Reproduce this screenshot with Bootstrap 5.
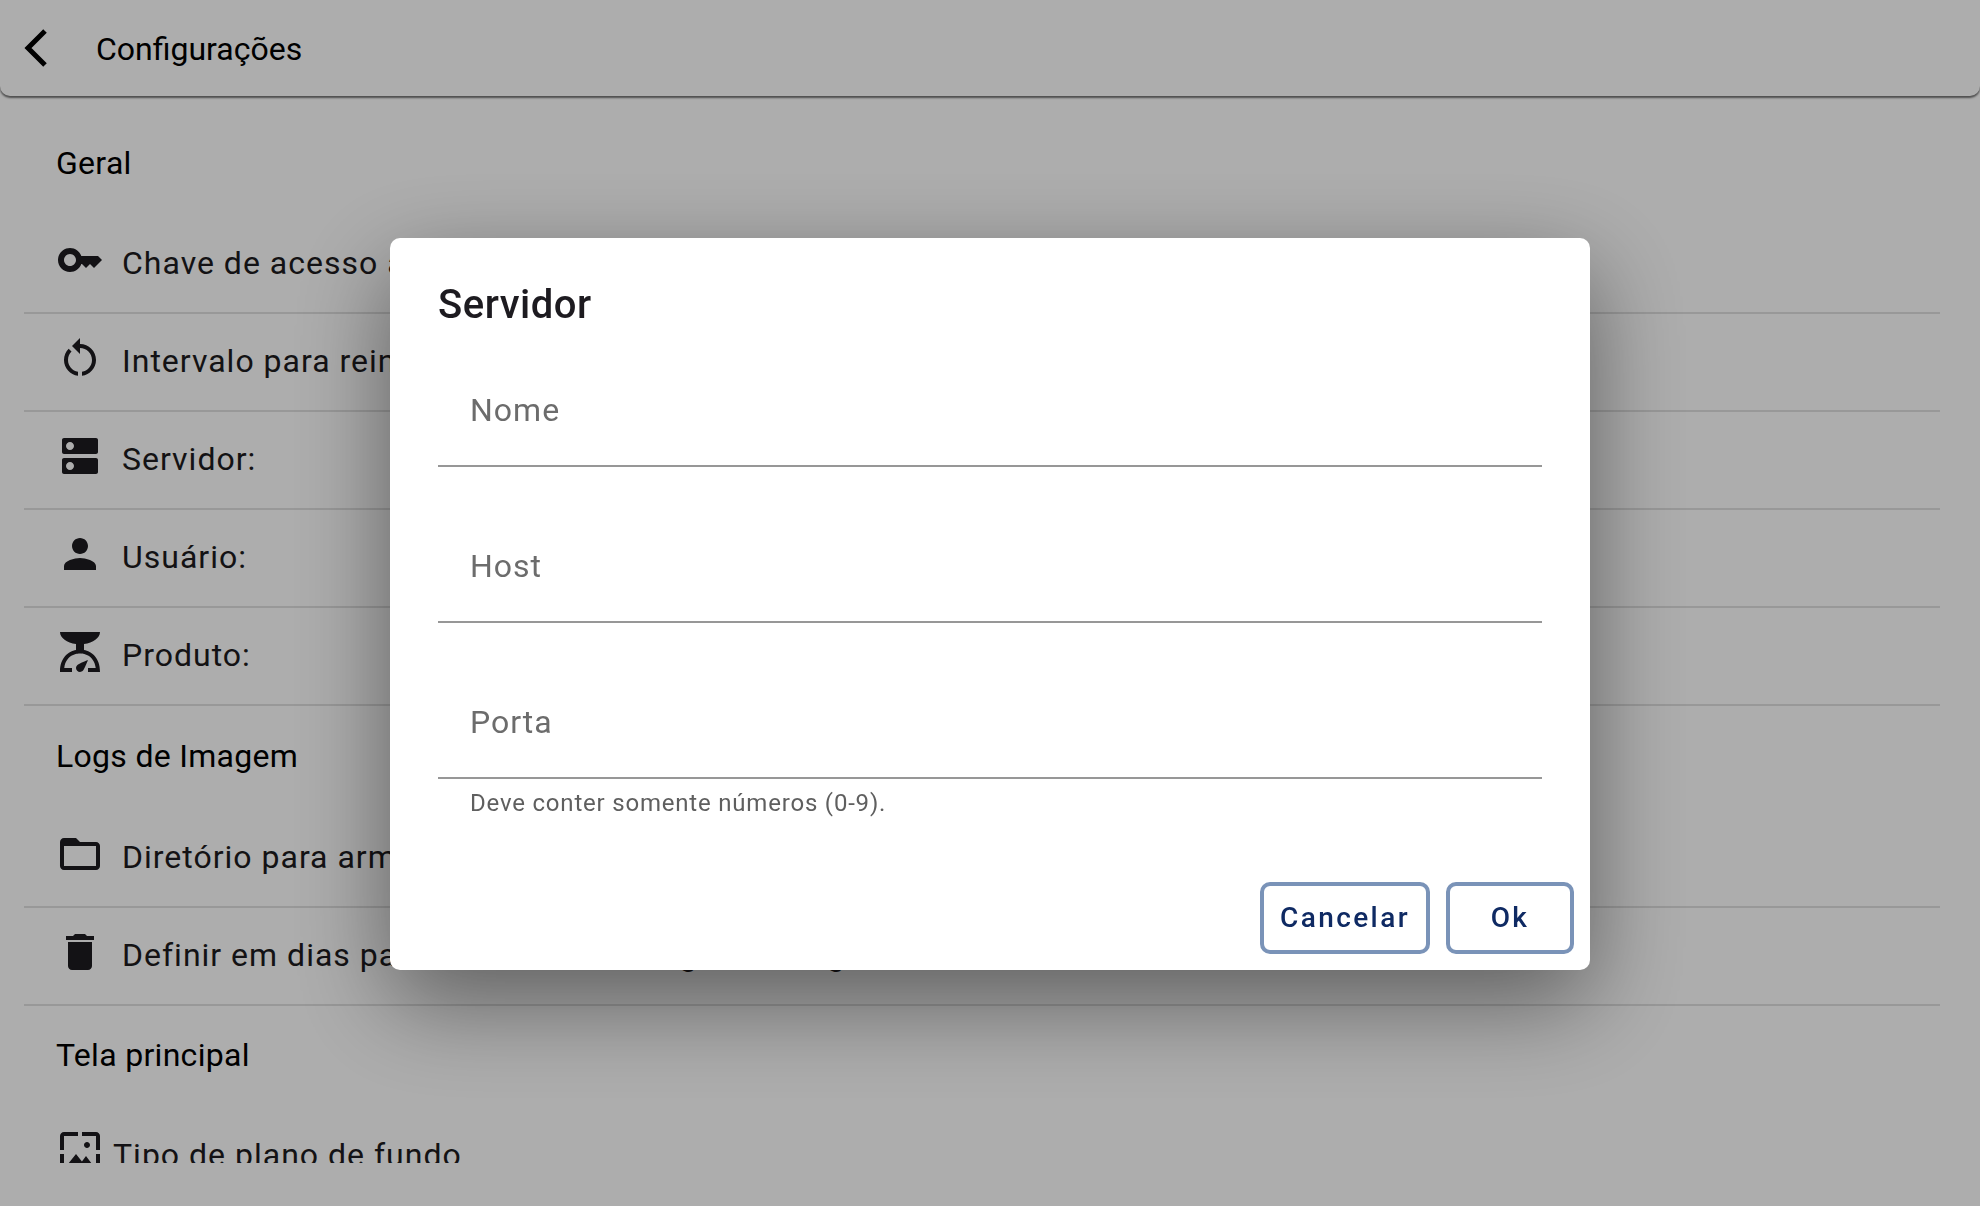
<!doctype html>
<html lang="pt">
<head>
<meta charset="utf-8">
<title>Configurações</title>
<link href="https://cdn.jsdelivr.net/npm/bootstrap@5.3.0/dist/css/bootstrap.min.css" rel="stylesheet">
<style>
html, body { height: 100%; }
body { font-family: Roboto, "Liberation Sans", sans-serif; background: #fff; color: #000; overflow: hidden; }
.app-bar { height: 96px; padding-left: 16px; padding-top: 2px; background: #fff; border-radius: 0 0 10px 10px; box-shadow: 0 2px 2px 0 rgba(0,0,0,.55); position: relative; }
.app-bar svg { width: 56px; height: 56px; flex: none; margin-top: -2px; }
.app-title { font-size: 32px; margin-left: 24px; line-height: 1; }
.settings-scroll { height: 1067px; overflow: hidden; padding: 18px 40px 0 24px; }
.sec-head { height: 102px; padding-left: 32px; padding-bottom: 5px; font-size: 32px; letter-spacing: .3px; color: #000; }
.sec-head.sec-tall { height: 104px; padding-bottom: 4px; }
.set-row { height: 98px; padding-left: 32px; padding-bottom: 2px; border-bottom: 2px solid #e0e0e0; font-size: 32px; letter-spacing: 1px; color: #1d1b20; white-space: nowrap; }
.set-row svg { width: 48px; height: 48px; flex: none; margin-right: 18px; margin-bottom: 6px; fill: #1d1b20; }
.set-row.no-rule { border-bottom: 0; padding-bottom: 4px; }
.set-row.no-rule svg { margin-right: 9px; margin-bottom: 6px; }
.scrim { position: fixed; inset: 0; background: rgba(0,0,0,.32); }
.dlg { position: fixed; left: 390px; top: 238px; width: 1200px; height: 732px; background: #fff; border-radius: 10px; padding: 0 16px 16px 48px;
  box-shadow: 0 32px 96px rgba(0,0,0,.46); }
.dlg-title { font-size: 40px; font-weight: 500; letter-spacing: .5px; color: #1d1b20; line-height: 1; padding-top: 47px; height: 84px; margin: 0; }
.fld { margin-right: 32px; height: 156px; }
.fld-box { height: 145px; padding: 0 32px 36px; border-bottom: 2px solid #979797; font-size: 32px; letter-spacing: 1px; color: #6c6c6c; line-height: 38px; }
.fld-help { padding: 10px 32px 0; font-size: 24px; letter-spacing: .8px; color: #5f5f5f; line-height: 28px; }
.dlg-btn { height: 72px; border: 4px solid #7a93b8; border-radius: 10px; background: #fff; color: #0f2a63; font-size: 28px; font-weight: 500; letter-spacing: 2.4px; padding: 0; }
.btn-a { width: 170px; }
.btn-b { width: 128px; }
</style>
</head>
<body>
<header class="app-bar d-flex align-items-center">
  <svg viewBox="0 0 56 56" fill="none" stroke="#000" stroke-width="5"><path d="M30 11 13 28l17 17" transform="translate(-1 0)"/></svg>
  <div class="app-title">Configurações</div>
</header>
<main class="settings-scroll">
  <div class="sec-head d-flex align-items-center">Geral</div>
  <div class="set-row d-flex align-items-center"><svg viewBox="0 0 24 24"><path d="M21 10h-8.35C11.83 7.67 9.61 6 7 6c-3.31 0-6 2.69-6 6s2.69 6 6 6c2.61 0 4.83-1.67 5.65-4H13l2 2 2-2 2 2 4-4.04L21 10zM7 15c-1.65 0-3-1.35-3-3s1.35-3 3-3 3 1.35 3 3-1.35 3-3 3z"/></svg>Chave de acesso à API:</div>
  <div class="set-row d-flex align-items-center"><svg viewBox="0 0 24 24"><path d="M12 5V2L8 6l4 4V7c3.31 0 6 2.69 6 6 0 2.97-2.16 5.43-5 5.91v2.02c3.95-.49 7-3.85 7-7.93 0-4.42-3.58-8-8-8zm-6 8c0-1.65.67-3.15 1.76-4.24L6.34 7.34C4.9 8.79 4 10.79 4 13c0 4.08 3.05 7.44 7 7.93v-2.02c-2.83-.48-5-2.94-5-5.91z"/></svg>Intervalo para reiniciar:</div>
  <div class="set-row d-flex align-items-center"><svg viewBox="0 0 24 24"><path d="M20 13H4c-.55 0-1 .45-1 1v6c0 .55.45 1 1 1h16c.55 0 1-.45 1-1v-6c0-.55-.45-1-1-1zM7 19c-1.1 0-2-.9-2-2s.9-2 2-2 2 .9 2 2-.9 2-2 2zM20 3H4c-.55 0-1 .45-1 1v6c0 .55.45 1 1 1h16c.55 0 1-.45 1-1V4c0-.55-.45-1-1-1zM7 9c-1.1 0-2-.9-2-2s.9-2 2-2 2 .9 2 2-.9 2-2 2z"/></svg>Servidor:</div>
  <div class="set-row d-flex align-items-center"><svg viewBox="0 0 24 24"><path d="M12 12c2.21 0 4-1.79 4-4s-1.79-4-4-4-4 1.79-4 4 1.79 4 4 4zm0 2c-2.67 0-8 1.34-8 4v2h16v-2c0-2.66-5.33-4-8-4z"/></svg>Usuário:</div>
  <div class="set-row d-flex align-items-center"><svg viewBox="0 0 24 24"><path d="M14 11V8c4.56-.58 8-3.1 8-6H2c0 2.9 3.44 5.42 8 6v3c-3.68.73-8 3.61-8 11h6v-2H4.13c.93-6.83 6.65-7.2 7.87-7.2s6.94.37 7.87 7.2H16v2h6c0-7.39-4.32-10.27-8-11zm-2 11c-1.1 0-2-.9-2-2 0-.55.22-1.05.59-1.41C11.39 17.79 16 16 16 16s-1.79 4.61-2.59 5.41c-.36.37-.86.59-1.41.59z"/></svg>Produto:</div>
  <div class="sec-head sec-tall d-flex align-items-center">Logs de Imagem</div>
  <div class="set-row d-flex align-items-center"><svg viewBox="0 0 24 24"><path d="M20 6h-8l-2-2H4c-1.1 0-1.99.9-1.99 2L2 18c0 1.1.9 2 2 2h16c1.1 0 2-.9 2-2V8c0-1.1-.9-2-2-2zm0 12H4V8h16v10z"/></svg>Diretório para armazenar logs de imagem:</div>
  <div class="set-row d-flex align-items-center"><svg viewBox="0 0 24 24"><path d="M6 19c0 1.1.9 2 2 2h8c1.1 0 2-.9 2-2V7H6v12zM19 4h-3.5l-1-1h-5l-1 1H5v2h14V4z"/></svg>Definir em dias para armazenar os logs de imagem:</div>
  <div class="sec-head d-flex align-items-center">Tela principal</div>
  <div class="set-row no-rule d-flex align-items-center"><svg viewBox="0 0 24 24"><path d="M4 4h7V2H4c-1.1 0-2 .9-2 2v7h2V4zm6 9l-4 5h12l-3-4-2.03 2.71L10 13zm7-4.5c0-.83-.67-1.5-1.5-1.5S14 7.67 14 8.5s.67 1.5 1.5 1.5S17 9.33 17 8.5zM20 2h-7v2h7v7h2V4c0-1.1-.9-2-2-2zm0 18h-7v2h7c1.1 0 2-.9 2-2v-7h-2v7zM4 13H2v7c0 1.1.9 2 2 2h7v-2H4v-7z"/></svg>Tipo de plano de fundo</div>
</main>
<div class="scrim"></div>
<section class="dlg d-flex flex-column">
  <h2 class="dlg-title">Servidor</h2>
  <div class="fld"><div class="fld-box d-flex align-items-end">Nome</div></div>
  <div class="fld"><div class="fld-box d-flex align-items-end">Host</div></div>
  <div class="fld"><div class="fld-box d-flex align-items-end">Porta</div><div class="fld-help">Deve conter somente números (0-9).</div></div>
  <div class="d-flex justify-content-end gap-3 mt-auto">
    <button class="dlg-btn btn-a" type="button">Cancelar</button>
    <button class="dlg-btn btn-b" type="button">Ok</button>
  </div>
</section>
<script src="https://cdn.jsdelivr.net/npm/bootstrap@5.3.0/dist/js/bootstrap.bundle.min.js"></script>
</body>
</html>
